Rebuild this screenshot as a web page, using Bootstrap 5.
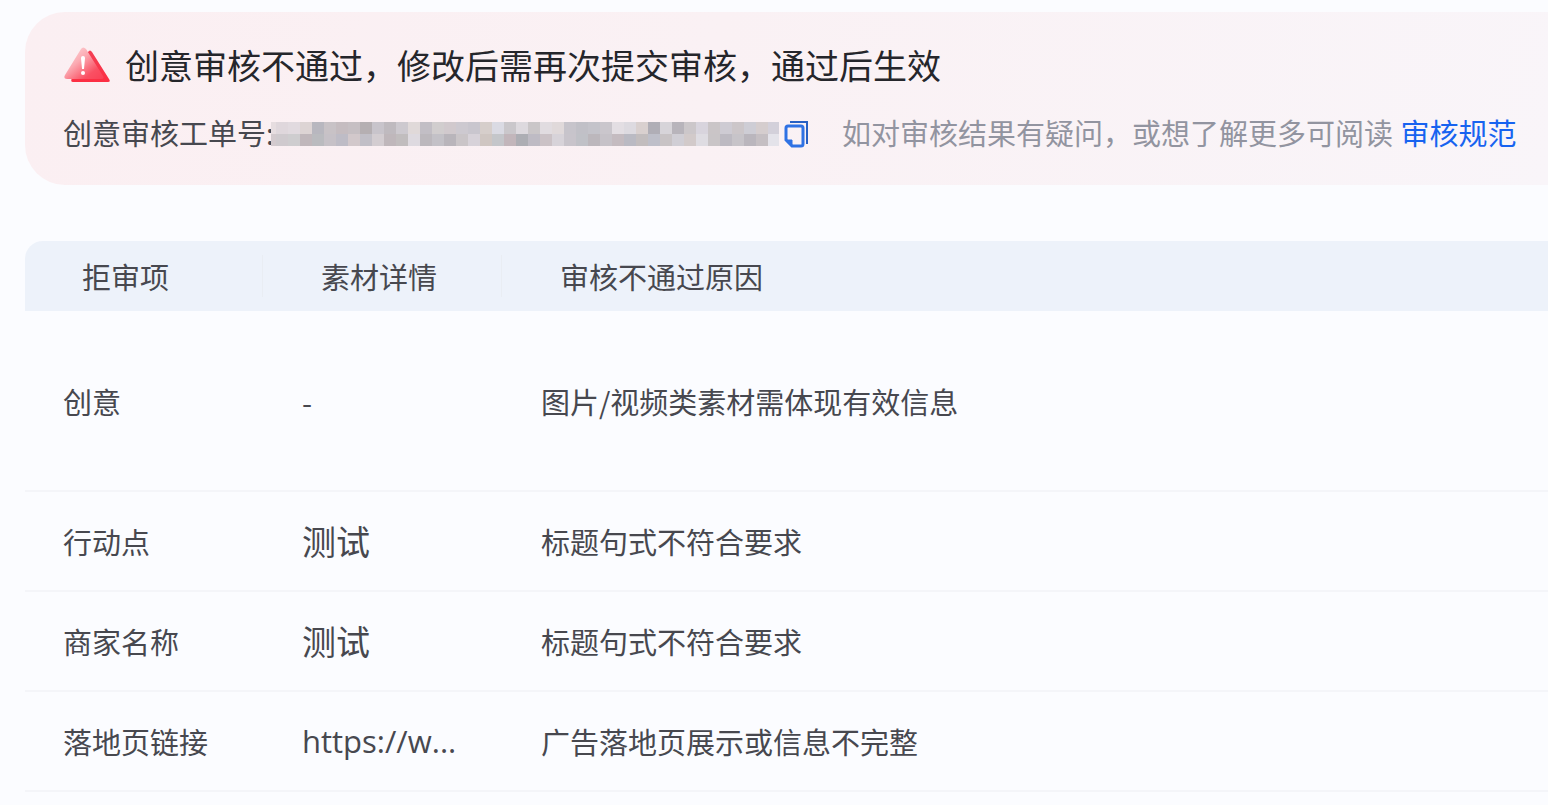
<!DOCTYPE html>
<html lang="zh-CN">
<head>
<meta charset="utf-8">
<meta name="viewport" content="width=device-width, initial-scale=1">
<title>创意审核结果</title>
<link href="https://cdn.jsdelivr.net/npm/bootstrap@5.3.0/dist/css/bootstrap.min.css" rel="stylesheet">
<style>
  body { background: #fbfcff; color: #47484f; font-family: "Noto Sans CJK SC", sans-serif; font-size: 29px; line-height: 44px; }
  .page { padding: 12px 0 0 25px; }
  .notice { background: linear-gradient(100deg, #fbeff2 0%, #faf1f4 45%, #f9f5f9 100%); border-radius: 40px 0 0 40px; padding: 28px 24px 31px 38px; margin-bottom: 56px; }
  .notice h1 { font-size: 34px; line-height: 50px; color: #25262b; font-weight: 400; }
  .headline { gap: 14px; margin-bottom: 20px; }
  .ticket { margin-left: -3px; }
  .hint { color: #9294a0; margin-left: 32px; }
  .hint a { color: #1763f0; text-decoration: none; margin-left: 1px; }
  .copy-btn { color: #2f72e4; margin-left: 5px; line-height: 0; }
  .reasons { table-layout: fixed; border-collapse: separate; border-spacing: 0; }
  .reasons col.narrow { width: 239px; }
  .reasons th, .reasons td { vertical-align: middle; text-align: left; font-weight: 400; padding: 0 0 0 38px; }
  .reasons thead th { background: #edf2fa; height: 70px; padding-left: 57px; position: relative; }
  .reasons thead th:first-child { border-top-left-radius: 18px; }
  .reasons thead th:not(:last-child)::after { content: ""; position: absolute; right: 1px; top: 14px; bottom: 14px; width: 1px; background: #e9edf3; }
  .reasons tbody tr > * { height: 100px; border-bottom: 2px solid #f4f5f9; }
  .reasons tbody tr.tall > * { height: 181px; }
  .reasons .asset { font-size: 34px; }
  .reasons .url { font-family: "Open Sans", "Noto Sans", sans-serif; font-size: 31px; }
</style>
</head>
<body>
<main class="page">
  <section class="notice" aria-labelledby="notice-title">
    <div class="headline d-flex align-items-center">
      <svg class="flex-shrink-0" width="48" height="36" viewBox="0 0 48 36" aria-hidden="true">
        <defs>
          <linearGradient id="back" x1="0" y1="0" x2="0" y2="1"><stop offset="0" stop-color="#f34054"/><stop offset="1" stop-color="#fc2e43"/></linearGradient>
          <linearGradient id="front" x1="0" y1="0" x2="1" y2="1"><stop offset="0" stop-color="#ffe0e1"/><stop offset=".4" stop-color="#fbaab2"/><stop offset=".75" stop-color="#fa5063"/><stop offset="1" stop-color="#fa4055"/></linearGradient>
        </defs>
        <path d="M25 5Q27 2 29 5L46 32Q48 35 45 35H10Q7 35 9 31Z" fill="url(#back)"/>
        <path d="M18 2Q20 -1 23 2L40 29Q42 32 38 32H4Q0 32 2 28Z" fill="url(#front)"/>
        <path d="M18 11Q18 9 20 9Q22 9 22 11L21 22H19Z" fill="#fff"/><circle cx="20" cy="26" r="2" fill="#fff"/>
      </svg>
      <h1 id="notice-title" class="mb-0">创意审核不通过，修改后需再次提交审核，通过后生效</h1>
    </div>
    <div class="d-flex align-items-center text-nowrap">
      <span>创意审核工单号:</span>
      <div class="ticket d-flex align-items-center mt-1">
        <svg id="masked" class="flex-shrink-0" width="508" height="24" viewBox="3 0 508 24" shape-rendering="crispEdges" role="img" aria-label="已隐藏的工单号"></svg>
        <button type="button" class="copy-btn btn p-0 border-0" aria-label="复制工单号">
          <svg width="26" height="28" viewBox="0 0 26 28" fill="none" stroke="currentColor" stroke-width="3">
            <path d="M6 2H23V24" stroke="#2760c4" stroke-width="2"/>
            <path d="M4 6H17Q19 6 19 8V24Q19 26 17 26H8L2 20V8Q2 6 4 6Z"/>
            <path d="M2 20H8V26Z" fill="currentColor" stroke-width="1"/>
          </svg>
        </button>
      </div>
      <span class="hint">如对审核结果有疑问，或想了解更多可阅读 <a href="#rules">审核规范</a></span>
    </div>
  </section>

  <table id="rules" class="reasons w-100">
    <colgroup><col class="narrow"><col class="narrow"><col></colgroup>
    <thead>
      <tr><th scope="col">拒审项</th><th scope="col">素材详情</th><th scope="col">审核不通过原因</th></tr>
    </thead>
    <tbody>
      <tr class="tall"><th scope="row">创意</th><td>-</td><td>图片/视频类素材需体现有效信息</td></tr>
      <tr><th scope="row">行动点</th><td class="asset">测试</td><td>标题句式不符合要求</td></tr>
      <tr><th scope="row">商家名称</th><td class="asset">测试</td><td>标题句式不符合要求</td></tr>
      <tr><th scope="row">落地页链接</th><td class="url">https://w...</td><td>广告落地页展示或信息不完整</td></tr>
    </tbody>
  </table>
</main>
<script src="https://cdn.jsdelivr.net/npm/bootstrap@5.3.0/dist/js/bootstrap.bundle.min.js"></script>
<script>
  // Mosaic that hides the ticket number: two rows of 12px cells, the first cell cut short.
  const rows = [
    "e6dde0 dfd7dc e1dadf ddd4d4 b8b7bf c8c2c6 c5bcc0 c6bfc3 b5afb2 c8c4cb bfbabf cdc9cf e0d9d9 c2bec5 d1cdce d1c9cd cdc9d0 c9c6ce d6cecb dadae3 cac7cb ddd9de cac6c8 e1dce0 e0d9da c7c4cb c1c0c7 c4c3ca cac6cc e3dee3 dddae0 d9d0cf b0aeb6 d7d4d9 b8b4bb ccc7ca d8d4dd cac5c7 cecbd3 ccc6c9 cecdd5 d5cdce d3d0da",
    "d3cace cfcace cecdcf c0b7bb babbbf c6c1c7 bebcc6 d2c8cb c1bfc7 d3cdd1 bfb7bb c1bdbe dedae0 bcb8bd c3c1c7 b9b5bb cac5c8 d7d2d9 cfc6c2 c4c6ca c2b6bb adaeb4 bebbc4 cbc2c6 d7d3d9 c8c4cb c0c1c7 bcb7bc c6c2c8 c4bbc0 babac3 c2bdbe bebfc9 c8c3c5 d0ced5 d2caca dedce2 c9c5c7 bdbac2 c7c4c9 bab6bd c5bfc3 e4e3ea"
  ];
  document.getElementById("masked").innerHTML = rows.map((row, y) =>
    row.split(" ").map((c, i) => `<rect x="${i * 12 - 4}" y="${y * 12}" width="12" height="12" fill="#${c}"/>`).join("")).join("");
</script>
</body>
</html>
